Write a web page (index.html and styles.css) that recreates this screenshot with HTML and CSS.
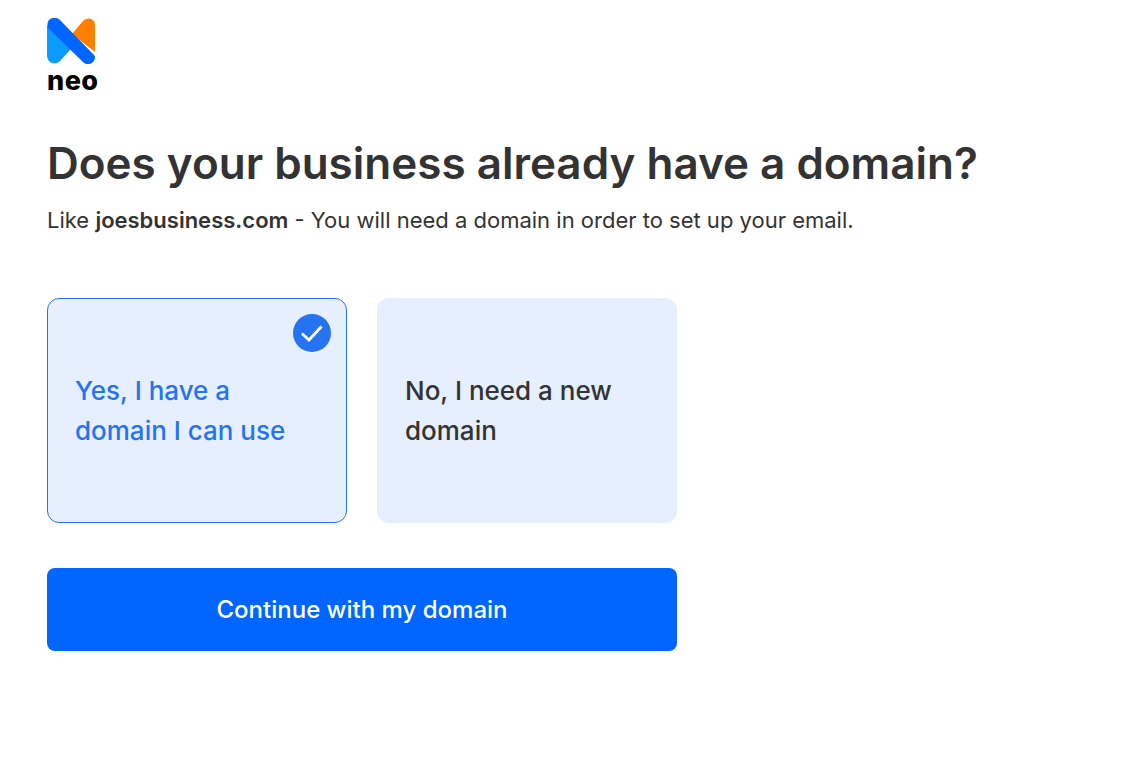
FILE: index.html
```html
<!DOCTYPE html>
<html lang="en">
<head>
<meta charset="utf-8">
<title>Neo</title>
<link rel="stylesheet" href="styles.css">
</head>
<body>
<main class="page">
  <header class="logo">
    <svg class="logo-mark" width="48" height="46" viewBox="0 0 48 46" aria-hidden="true">
      <path d="M25 16 L36 3 C40 -1.500 48 0 48 7 L48 34 Z" fill="#ff7f00"/>
      <path d="M0 7 L0 37 C0 45 8 48 13 43 L24 31 Z" fill="#0a9bff"/>
      <path d="M2 2 C5 -1 10 -1 13 2 L46 36 C48 38 48 39 48 39 C48 45 41 49 36 44 L2 11 C0 8.500 0 4.500 2 2 Z" fill="#0066ff"/>
    </svg>
    <span class="logo-word">neo</span>
  </header>
  <h1 class="title">Does your business already have a domain?</h1>
  <p class="subtitle">Like <strong>joesbusiness.com</strong> - You will need a domain in order to set up your email.</p>
  <div class="options">
    <div class="option option-selected">
      <span class="check">
        <svg width="38" height="38" viewBox="0 0 38 38" aria-hidden="true">
          <circle cx="19" cy="19" r="19" fill="#2673f0"/>
          <path d="M9 19.500 L16 26 L28.500 12.500" fill="none" stroke="#fff" stroke-width="2.800"/>
        </svg>
      </span>
      Yes, I have a domain I can use
    </div>
    <div class="option">No, I need a new domain</div>
  </div>
  <button class="continue" type="button">Continue with my domain</button>
</main>
</body>
</html>
```
FILE: styles.css
```css
* {
  box-sizing: border-box;
}

html,
body {
  margin: 0;
  background: #fff;
}

body {
  font-family: "Inter", "Liberation Sans", sans-serif;
  color: #333;
}

.page {
  padding: 18px 0 0 47px;
}

.logo {
  display: flex;
  flex-direction: column;
  align-items: flex-start;
}

.logo-mark {
  display: block;
}

.logo-word {
  font-size: 27px;
  line-height: 18px;
  font-weight: 800;
  color: #000;
  margin-top: 8px;
  letter-spacing: 0.5px;
}

.title {
  margin: 46px 0 0;
  font-size: 44px;
  line-height: 54px;
  font-weight: 600;
  color: #333;
  letter-spacing: 0;
  white-space: nowrap;
}

.subtitle {
  margin: 14px 0 0;
  font-size: 22px;
  line-height: 32px;
  font-weight: 400;
}

.subtitle strong {
  font-weight: 600;
}

.options {
  display: flex;
  gap: 30px;
  margin-top: 62px;
}

.option {
  position: relative;
  display: flex;
  align-items: center;
  width: 300px;
  height: 225px;
  padding: 0 28px;
  background: #e5effd;
  border-radius: 12px;
  font-size: 26px;
  line-height: 40px;
  font-weight: 500;
}

.option-selected {
  border: 1px solid #2673f0;
  color: #2673f0;
  padding: 0 27px;
}

.check {
  position: absolute;
  top: 15px;
  right: 15px;
  width: 38px;
  height: 38px;
}

.check svg {
  display: block;
}

.continue {
  display: block;
  width: 630px;
  height: 83px;
  margin-top: 45px;
  border: 0;
  border-radius: 8px;
  background: #0066ff;
  color: #fff;
  font-family: inherit;
  font-size: 24px;
  font-weight: 500;
}
```
